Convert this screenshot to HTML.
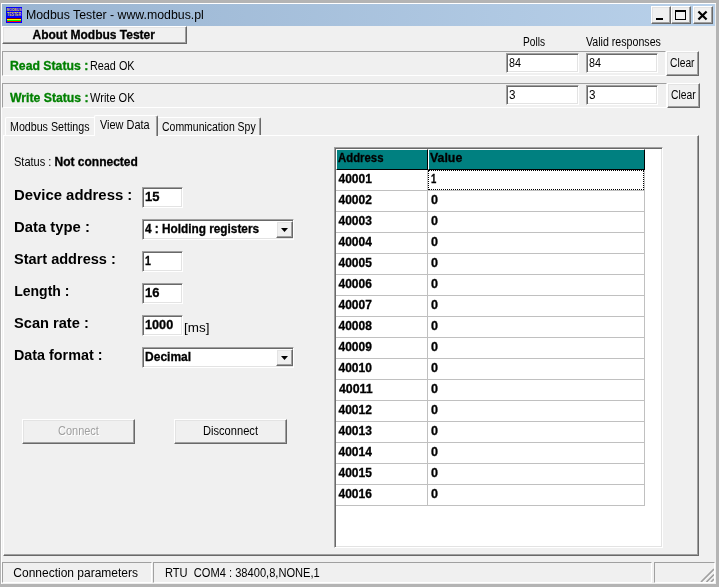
<!DOCTYPE html>
<html><head><meta charset="utf-8"><title>Modbus Tester - www.modbus.pl</title><style>
html,body{margin:0;padding:0;background:#b4b4b4}
body{width:719px;height:587px;background:#b4b4b4;overflow:hidden;position:relative;font-family:"Liberation Sans",sans-serif;font-size:12px}
div,svg,span.t{position:absolute}
.t{white-space:pre;transform-origin:0 0;display:block}
.r{background:#f0f0f0;border:1px solid;border-color:#fff #696969 #696969 #fff;box-shadow:inset -1px -1px #a0a0a0,inset 1px 1px #e3e3e3}
.s{border:1px solid;border-color:#a0a0a0 #fff #fff #a0a0a0;box-shadow:inset 1px 1px #696969,inset -1px -1px #e3e3e3}
.s1{border:1px solid;border-color:#a0a0a0 #fff #fff #a0a0a0}
</style></head>
<body>
<div style="left:1px;top:3px;width:715px;height:581px;background:#f0f0f0;border-top:1px solid #fff;border-left:1px solid #fff;box-sizing:border-box"></div>
<div style="left:2px;top:4px;width:713px;height:22px;background:linear-gradient(90deg,#99b4d1 0%,#b9d1ea 100%)"></div>
<svg style="left:6px;top:7px" width="16" height="16" viewBox="0 0 16 16">
<rect width="16" height="16" fill="#0000ff"/>
<text x="0.6" y="3.9" font-family="Liberation Sans, sans-serif" font-weight="bold" font-size="4.1" fill="#e6d23c" textLength="14.8" lengthAdjust="spacingAndGlyphs">MODBUS</text>
<text x="1" y="8.7" font-family="Liberation Sans, sans-serif" font-weight="bold" font-size="4.8" fill="#e6d23c" textLength="14" lengthAdjust="spacingAndGlyphs">TESTER</text>
<rect x="1" y="11" width="14" height="1" fill="#800000"/>
<rect x="1" y="12" width="14" height="1" fill="#ffff00"/>
<rect x="1" y="13" width="14" height="1" fill="#00ff00"/>
<rect x="1" y="14" width="14" height="1" fill="#ff0000"/>
</svg>
<div class="r" style="left:651px;top:6px;width:18px;height:16px;"><div style="left:4px;top:11px;width:7px;height:2px;background:#000"></div></div>
<div class="r" style="left:671px;top:6px;width:18px;height:16px;"><div style="left:3px;top:3px;width:9px;height:7px;border:1px solid #000;border-top-width:2px"></div></div>
<div class="r" style="left:693px;top:6px;width:18px;height:16px;"><svg style="left:3px;top:3px" width="12" height="12" viewBox="0 0 12 12"><path d="M2.2 2.2 L8.8 8.8 M8.8 2.2 L2.2 8.8" stroke="#000" stroke-width="2.2" stroke-linecap="square" fill="none"/></svg></div>
<div class="r" style="left:2px;top:26px;width:183px;height:16px;"></div>
<div class="s1" style="left:2px;top:51px;width:662px;height:23px"></div>
<div class="s1" style="left:2px;top:83px;width:663px;height:23px"></div>
<div class="s" style="left:506px;top:53px;width:71px;height:18px;background:#fff"></div>
<div class="s" style="left:586px;top:53px;width:70px;height:18px;background:#fff"></div>
<div class="s" style="left:506px;top:85px;width:71px;height:18px;background:#fff"></div>
<div class="s" style="left:586px;top:85px;width:70px;height:18px;background:#fff"></div>
<div class="r" style="left:666px;top:51px;width:31px;height:23px;"></div>
<div class="r" style="left:667px;top:83px;width:31px;height:23px;"></div>
<div style="left:3px;top:135px;width:696px;height:421px;box-sizing:border-box;border-left:1px solid #fff;border-top:1px solid #fff;border-right:1px solid #696969;border-bottom:1px solid #696969;box-shadow:inset -1px -1px #a0a0a0"></div>
<div style="left:5px;top:117px;width:89px;height:18px;box-sizing:border-box;border-left:1px solid #fff;border-top:1px solid #fff;border-radius:2px 0 0 0"></div>
<div style="left:158px;top:117px;width:103px;height:18px;box-sizing:border-box;border-top:1px solid #fff;border-right:1px solid #696969;box-shadow:inset -1px 0 #a0a0a0;border-radius:0 2px 0 0"></div>
<div style="left:94px;top:115px;width:64px;height:21px;box-sizing:border-box;background:#f0f0f0;border-left:1px solid #fff;border-top:1px solid #fff;border-right:1px solid #696969;box-shadow:inset -1px 0 #a0a0a0;border-radius:2px 2px 0 0"></div>
<div class="s" style="left:142px;top:187px;width:39px;height:19px;background:#fff"></div>
<div class="s" style="left:142px;top:251px;width:39px;height:19px;background:#fff"></div>
<div class="s" style="left:142px;top:283px;width:39px;height:19px;background:#fff"></div>
<div class="s" style="left:142px;top:315px;width:39px;height:19px;background:#fff"></div>
<div class="s" style="left:142px;top:219px;width:150px;height:19px;background:#fff"></div>
<div class="r" style="left:276px;top:221px;width:15px;height:15px;"><svg style="left:4px;top:6px" width="7" height="4" viewBox="0 0 7 4"><path d="M0 0H7L3.5 4Z" fill="#000"/></svg></div>
<div class="s" style="left:142px;top:347px;width:150px;height:19px;background:#fff"></div>
<div class="r" style="left:276px;top:349px;width:15px;height:15px;"><svg style="left:4px;top:6px" width="7" height="4" viewBox="0 0 7 4"><path d="M0 0H7L3.5 4Z" fill="#000"/></svg></div>
<div class="r" style="left:22px;top:419px;width:111px;height:23px;"></div>
<div class="r" style="left:174px;top:419px;width:111px;height:23px;"></div>
<div class="s" style="left:334px;top:147px;width:327px;height:399px;background:#fff"></div>
<div style="left:336px;top:149px;width:92px;height:21px;box-sizing:border-box;background:#008080;border-left:1px solid #fff;border-top:1px solid #fff;border-right:1px solid #000;border-bottom:1px solid #000"></div>
<div style="left:428px;top:149px;width:217px;height:21px;box-sizing:border-box;background:#008080;border-left:1px solid #fff;border-top:1px solid #fff;border-right:1px solid #000;border-bottom:1px solid #000"></div>
<div style="left:336px;top:190px;width:309px;height:1px;background:#c0c0c0"></div>
<div style="left:336px;top:211px;width:309px;height:1px;background:#c0c0c0"></div>
<div style="left:336px;top:232px;width:309px;height:1px;background:#c0c0c0"></div>
<div style="left:336px;top:253px;width:309px;height:1px;background:#c0c0c0"></div>
<div style="left:336px;top:274px;width:309px;height:1px;background:#c0c0c0"></div>
<div style="left:336px;top:295px;width:309px;height:1px;background:#c0c0c0"></div>
<div style="left:336px;top:316px;width:309px;height:1px;background:#c0c0c0"></div>
<div style="left:336px;top:337px;width:309px;height:1px;background:#c0c0c0"></div>
<div style="left:336px;top:358px;width:309px;height:1px;background:#c0c0c0"></div>
<div style="left:336px;top:379px;width:309px;height:1px;background:#c0c0c0"></div>
<div style="left:336px;top:400px;width:309px;height:1px;background:#c0c0c0"></div>
<div style="left:336px;top:421px;width:309px;height:1px;background:#c0c0c0"></div>
<div style="left:336px;top:442px;width:309px;height:1px;background:#c0c0c0"></div>
<div style="left:336px;top:463px;width:309px;height:1px;background:#c0c0c0"></div>
<div style="left:336px;top:484px;width:309px;height:1px;background:#c0c0c0"></div>
<div style="left:336px;top:505px;width:309px;height:1px;background:#c0c0c0"></div>
<div style="left:427px;top:170px;width:1px;height:336px;background:#c0c0c0"></div>
<div style="left:644px;top:170px;width:1px;height:336px;background:#c0c0c0"></div>
<div style="left:428px;top:170px;width:216px;height:20px;box-sizing:border-box;border:1px dotted #000"></div>
<div class="s1" style="left:2px;top:562px;width:148px;height:19px"></div>
<div class="s1" style="left:153px;top:562px;width:497px;height:19px"></div>
<div class="s1" style="left:654px;top:562px;width:59px;height:19px"></div>
<svg style="left:700px;top:568px" width="14" height="14" viewBox="0 0 14 14"><path d="M2 14.5L14.5 2M7.5 14.5L14.5 7.5M12 14.5L14.5 12" stroke="#fff" stroke-width="1" fill="none"/><path d="M1 14L14 1M6.5 14L14 6.5M11 14L14 11" stroke="#a0a0a0" stroke-width="1.7" fill="none"/></svg>
<div id="tx" style="left:0;top:0;width:719px;height:587px;will-change:transform">
<span class="t" style="left:25.7px;top:8.8px;font-size:12px;line-height:12px;color:#000;transform:scaleX(1.027);">Modbus Tester - www.modbus.pl</span>
<span class="t" style="left:32.5px;top:28.8px;font-size:12px;line-height:12px;color:#000;font-weight:bold;-webkit-text-stroke:0.3px;">About Modbus Tester</span>
<span class="t" style="left:10.3px;top:59.8px;font-size:12px;line-height:12px;color:#008000;font-weight:bold;-webkit-text-stroke:0.3px;transform:scaleX(1.020);">Read Status :</span>
<span class="t" style="left:90.3px;top:59.8px;font-size:12px;line-height:12px;color:#000;transform:scaleX(0.902);">Read OK</span>
<span class="t" style="left:9.9px;top:91.8px;font-size:12px;line-height:12px;color:#008000;font-weight:bold;-webkit-text-stroke:0.3px;transform:scaleX(1.019);">Write Status :</span>
<span class="t" style="left:89.6px;top:91.8px;font-size:12px;line-height:12px;color:#000;transform:scaleX(0.920);">Write OK</span>
<span class="t" style="left:522.5px;top:35.8px;font-size:12px;line-height:12px;color:#000;transform:scaleX(0.846);">Polls</span>
<span class="t" style="left:586.0px;top:35.8px;font-size:12px;line-height:12px;color:#000;transform:scaleX(0.886);">Valid responses</span>
<span class="t" style="left:509.0px;top:56.8px;font-size:12px;line-height:12px;color:#000;transform:scaleX(0.898);">84</span>
<span class="t" style="left:589.0px;top:56.8px;font-size:12px;line-height:12px;color:#000;transform:scaleX(0.898);">84</span>
<span class="t" style="left:509.0px;top:88.8px;font-size:12px;line-height:12px;color:#000;transform:scaleX(0.972);">3</span>
<span class="t" style="left:589.0px;top:88.8px;font-size:12px;line-height:12px;color:#000;transform:scaleX(0.972);">3</span>
<span class="t" style="left:670.2px;top:56.8px;font-size:12px;line-height:12px;color:#000;transform:scaleX(0.854);">Clear</span>
<span class="t" style="left:671.1px;top:88.8px;font-size:12px;line-height:12px;color:#000;transform:scaleX(0.858);">Clear</span>
<span class="t" style="left:10.2px;top:120.8px;font-size:12px;line-height:12px;color:#000;transform:scaleX(0.889);">Modbus Settings</span>
<span class="t" style="left:100.4px;top:118.8px;font-size:12px;line-height:12px;color:#000;transform:scaleX(0.910);">View Data</span>
<span class="t" style="left:162.1px;top:120.8px;font-size:12px;line-height:12px;color:#000;transform:scaleX(0.872);">Communication Spy</span>
<span class="t" style="left:14.1px;top:155.8px;font-size:12px;line-height:12px;color:#000;transform:scaleX(0.919);">Status :</span>
<span class="t" style="left:54.5px;top:155.8px;font-size:12px;line-height:12px;color:#000;font-weight:bold;-webkit-text-stroke:0.3px;">Not connected</span>
<span class="t" style="left:14.2px;top:188.1px;font-size:14px;line-height:14px;color:#000;font-weight:bold;transform:scaleX(1.063);">Device address :</span>
<span class="t" style="left:14.2px;top:220.1px;font-size:14px;line-height:14px;color:#000;font-weight:bold;transform:scaleX(1.060);">Data type :</span>
<span class="t" style="left:14.2px;top:252.1px;font-size:14px;line-height:14px;color:#000;font-weight:bold;transform:scaleX(1.038);">Start address :</span>
<span class="t" style="left:14.2px;top:284.1px;font-size:14px;line-height:14px;color:#000;font-weight:bold;">Length :</span>
<span class="t" style="left:14.2px;top:316.1px;font-size:14px;line-height:14px;color:#000;font-weight:bold;transform:scaleX(1.045);">Scan rate :</span>
<span class="t" style="left:14.2px;top:348.1px;font-size:14px;line-height:14px;color:#000;font-weight:bold;transform:scaleX(1.024);">Data format :</span>
<span class="t" style="left:145.1px;top:190.8px;font-size:12px;line-height:12px;color:#000;font-weight:bold;-webkit-text-stroke:0.3px;transform:scaleX(1.085);">15</span>
<span class="t" style="left:145.1px;top:222.8px;font-size:12px;line-height:12px;color:#000;font-weight:bold;-webkit-text-stroke:0.3px;transform:scaleX(0.983);">4 : Holding registers</span>
<span class="t" style="left:145.1px;top:254.8px;font-size:12px;line-height:12px;color:#000;font-weight:bold;-webkit-text-stroke:0.3px;transform:scaleX(0.882);">1</span>
<span class="t" style="left:145.1px;top:286.8px;font-size:12px;line-height:12px;color:#000;font-weight:bold;-webkit-text-stroke:0.3px;transform:scaleX(1.085);">16</span>
<span class="t" style="left:145.1px;top:318.8px;font-size:12px;line-height:12px;color:#000;font-weight:bold;-webkit-text-stroke:0.3px;transform:scaleX(1.056);">1000</span>
<span class="t" style="left:145.1px;top:350.8px;font-size:12px;line-height:12px;color:#000;font-weight:bold;-webkit-text-stroke:0.3px;">Decimal</span>
<span class="t" style="left:184.4px;top:321.0px;font-size:13px;line-height:13px;color:#000;transform:scaleX(1.034);">[ms]</span>
<span class="t" style="left:58.9px;top:425.8px;font-size:12px;line-height:12px;color:#fff;transform:scaleX(0.915);">Connect</span>
<span class="t" style="left:57.9px;top:424.8px;font-size:12px;line-height:12px;color:#a0a0a0;transform:scaleX(0.915);">Connect</span>
<span class="t" style="left:202.9px;top:424.8px;font-size:12px;line-height:12px;color:#000;transform:scaleX(0.926);">Disconnect</span>
<span class="t" style="left:337.9px;top:151.8px;font-size:12px;line-height:12px;color:#000;font-weight:bold;-webkit-text-stroke:0.3px;transform:scaleX(0.947);">Address</span>
<span class="t" style="left:429.9px;top:151.8px;font-size:12px;line-height:12px;color:#000;font-weight:bold;-webkit-text-stroke:0.3px;transform:scaleX(1.030);">Value</span>
<span class="t" style="left:338.5px;top:172.8px;font-size:12px;line-height:12px;color:#000;font-weight:bold;-webkit-text-stroke:0.3px;">40001</span>
<span class="t" style="left:430.5px;top:172.8px;font-size:12px;line-height:12px;color:#000;font-weight:bold;-webkit-text-stroke:0.3px;transform:scaleX(0.793);">1</span>
<span class="t" style="left:338.5px;top:193.8px;font-size:12px;line-height:12px;color:#000;font-weight:bold;-webkit-text-stroke:0.3px;">40002</span>
<span class="t" style="left:430.5px;top:193.8px;font-size:12px;line-height:12px;color:#000;font-weight:bold;-webkit-text-stroke:0.3px;transform:scaleX(1.047);">0</span>
<span class="t" style="left:338.5px;top:214.8px;font-size:12px;line-height:12px;color:#000;font-weight:bold;-webkit-text-stroke:0.3px;">40003</span>
<span class="t" style="left:430.5px;top:214.8px;font-size:12px;line-height:12px;color:#000;font-weight:bold;-webkit-text-stroke:0.3px;transform:scaleX(1.047);">0</span>
<span class="t" style="left:338.5px;top:235.8px;font-size:12px;line-height:12px;color:#000;font-weight:bold;-webkit-text-stroke:0.3px;">40004</span>
<span class="t" style="left:430.5px;top:235.8px;font-size:12px;line-height:12px;color:#000;font-weight:bold;-webkit-text-stroke:0.3px;transform:scaleX(1.047);">0</span>
<span class="t" style="left:338.5px;top:256.8px;font-size:12px;line-height:12px;color:#000;font-weight:bold;-webkit-text-stroke:0.3px;">40005</span>
<span class="t" style="left:430.5px;top:256.8px;font-size:12px;line-height:12px;color:#000;font-weight:bold;-webkit-text-stroke:0.3px;transform:scaleX(1.047);">0</span>
<span class="t" style="left:338.5px;top:277.8px;font-size:12px;line-height:12px;color:#000;font-weight:bold;-webkit-text-stroke:0.3px;">40006</span>
<span class="t" style="left:430.5px;top:277.8px;font-size:12px;line-height:12px;color:#000;font-weight:bold;-webkit-text-stroke:0.3px;transform:scaleX(1.047);">0</span>
<span class="t" style="left:338.5px;top:298.8px;font-size:12px;line-height:12px;color:#000;font-weight:bold;-webkit-text-stroke:0.3px;">40007</span>
<span class="t" style="left:430.5px;top:298.8px;font-size:12px;line-height:12px;color:#000;font-weight:bold;-webkit-text-stroke:0.3px;transform:scaleX(1.047);">0</span>
<span class="t" style="left:338.5px;top:319.8px;font-size:12px;line-height:12px;color:#000;font-weight:bold;-webkit-text-stroke:0.3px;">40008</span>
<span class="t" style="left:430.5px;top:319.8px;font-size:12px;line-height:12px;color:#000;font-weight:bold;-webkit-text-stroke:0.3px;transform:scaleX(1.047);">0</span>
<span class="t" style="left:338.5px;top:340.8px;font-size:12px;line-height:12px;color:#000;font-weight:bold;-webkit-text-stroke:0.3px;">40009</span>
<span class="t" style="left:430.5px;top:340.8px;font-size:12px;line-height:12px;color:#000;font-weight:bold;-webkit-text-stroke:0.3px;transform:scaleX(1.047);">0</span>
<span class="t" style="left:338.5px;top:361.8px;font-size:12px;line-height:12px;color:#000;font-weight:bold;-webkit-text-stroke:0.3px;">40010</span>
<span class="t" style="left:430.5px;top:361.8px;font-size:12px;line-height:12px;color:#000;font-weight:bold;-webkit-text-stroke:0.3px;transform:scaleX(1.047);">0</span>
<span class="t" style="left:338.5px;top:382.8px;font-size:12px;line-height:12px;color:#000;font-weight:bold;-webkit-text-stroke:0.3px;transform:scaleX(1.030);">40011</span>
<span class="t" style="left:430.5px;top:382.8px;font-size:12px;line-height:12px;color:#000;font-weight:bold;-webkit-text-stroke:0.3px;transform:scaleX(1.047);">0</span>
<span class="t" style="left:338.5px;top:403.8px;font-size:12px;line-height:12px;color:#000;font-weight:bold;-webkit-text-stroke:0.3px;">40012</span>
<span class="t" style="left:430.5px;top:403.8px;font-size:12px;line-height:12px;color:#000;font-weight:bold;-webkit-text-stroke:0.3px;transform:scaleX(1.047);">0</span>
<span class="t" style="left:338.5px;top:424.8px;font-size:12px;line-height:12px;color:#000;font-weight:bold;-webkit-text-stroke:0.3px;">40013</span>
<span class="t" style="left:430.5px;top:424.8px;font-size:12px;line-height:12px;color:#000;font-weight:bold;-webkit-text-stroke:0.3px;transform:scaleX(1.047);">0</span>
<span class="t" style="left:338.5px;top:445.8px;font-size:12px;line-height:12px;color:#000;font-weight:bold;-webkit-text-stroke:0.3px;">40014</span>
<span class="t" style="left:430.5px;top:445.8px;font-size:12px;line-height:12px;color:#000;font-weight:bold;-webkit-text-stroke:0.3px;transform:scaleX(1.047);">0</span>
<span class="t" style="left:338.5px;top:466.8px;font-size:12px;line-height:12px;color:#000;font-weight:bold;-webkit-text-stroke:0.3px;">40015</span>
<span class="t" style="left:430.5px;top:466.8px;font-size:12px;line-height:12px;color:#000;font-weight:bold;-webkit-text-stroke:0.3px;transform:scaleX(1.047);">0</span>
<span class="t" style="left:338.5px;top:487.8px;font-size:12px;line-height:12px;color:#000;font-weight:bold;-webkit-text-stroke:0.3px;">40016</span>
<span class="t" style="left:430.5px;top:487.8px;font-size:12px;line-height:12px;color:#000;font-weight:bold;-webkit-text-stroke:0.3px;transform:scaleX(1.047);">0</span>
<span class="t" style="left:13.3px;top:566.8px;font-size:12px;line-height:12px;color:#000;">Connection parameters</span>
<span class="t" style="left:164.7px;top:566.8px;font-size:12px;line-height:12px;color:#000;transform:scaleX(0.926);">RTU&nbsp;&nbsp;COM4 : 38400,8,NONE,1</span>
</div>
</body></html>
